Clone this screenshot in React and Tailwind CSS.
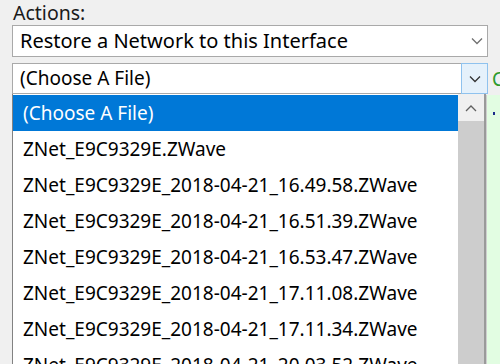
import React from 'react';

const files = [
    '(Choose A File)',
    'ZNet_E9C9329E.ZWave',
    'ZNet_E9C9329E_2018-04-21_16.49.58.ZWave',
    'ZNet_E9C9329E_2018-04-21_16.51.39.ZWave',
    'ZNet_E9C9329E_2018-04-21_16.53.47.ZWave',
    'ZNet_E9C9329E_2018-04-21_17.11.08.ZWave',
    'ZNet_E9C9329E_2018-04-21_17.11.34.ZWave',
    'ZNet_E9C9329E_2018-04-21_20.03.52.ZWave',
];

const Chevron = ({ className, up }) => (
    <svg width="12" height="8" viewBox="0 0 12 8" className={className}>
        <path d={up ? 'M1 7 L6 2 L11 7' : 'M1 1.5 L6 6.5 L11 1.5'} fill="none" stroke="currentColor" strokeWidth="1.3" />
    </svg>
);

export default function App() {
    return (
        <div
            className="relative w-[500px] h-[364px] overflow-hidden bg-[#f0f0f0] text-black"
            style={{ fontFamily: '"Noto Sans", "Open Sans", sans-serif' }}
        >
            <div className="flex">
                <div className="w-[476px] shrink-0 ml-[12px]">
                    <div className="h-[25px] pl-[1px] text-[19.5px] leading-[25px] text-[#1a1a1a]">Actions:</div>
                    <div className="h-[32px] flex items-center bg-white border border-[#a9a9a9] pl-[7px]">
                        <span className="flex-1 text-[20px] leading-none">Restore a Network to this Interface</span>
                        <Chevron className="mr-[4px] text-[#707070]" />
                    </div>
                    <div className="mt-[6px] h-[31px] flex bg-white border border-[#a9a9a9] border-r-0">
                        <span className="flex-1 pl-[7px] text-[19px] leading-[29px]">(Choose A File)</span>
                        <div className="w-[27px] flex items-center justify-center bg-[#e5f1fb] border border-[#8fc2ee] -my-[1px]">
                            <Chevron className="text-[#333]" />
                        </div>
                    </div>
                </div>
                <div className="shrink-0 pl-[4px] pt-[64px] whitespace-nowrap">
                    <span className="text-[19px] leading-[30px] text-[#2e9a2e]">Choose</span>
                </div>
            </div>

            <div className="absolute left-[486px] top-[95px] w-[20px] h-[280px] bg-[#e2fde2] border-l border-[#cfcfcf]">
                <div className="ml-[6px] mt-[17px] w-[2px] h-[3px] bg-[#1c2a8a]" />
            </div>

            <div className="absolute left-[12px] top-[94px] w-[474px] h-[280px] flex bg-white border-l border-[#828282] border-r-2 border-r-[#9a9a9a]">
                <div className="flex-1 pt-[1px]">
                    {files.map((f, i) => (
                        <div
                            key={f}
                            className={`h-[36px] pl-[10px] text-[19px] leading-[36px] whitespace-nowrap ${i === 0 ? 'bg-[#0078d7] text-white' : 'text-black'}`}
                        >
                            {f}
                        </div>
                    ))}
                </div>
                <div className="w-[26px] flex flex-col bg-[#f0f0f0]">
                    <div className="h-[27px] flex items-center justify-center">
                        <Chevron up className="text-[#606060]" />
                    </div>
                    <div className="flex-1 bg-[#cdcdcd]" />
                </div>
            </div>
        </div>
    );
}
